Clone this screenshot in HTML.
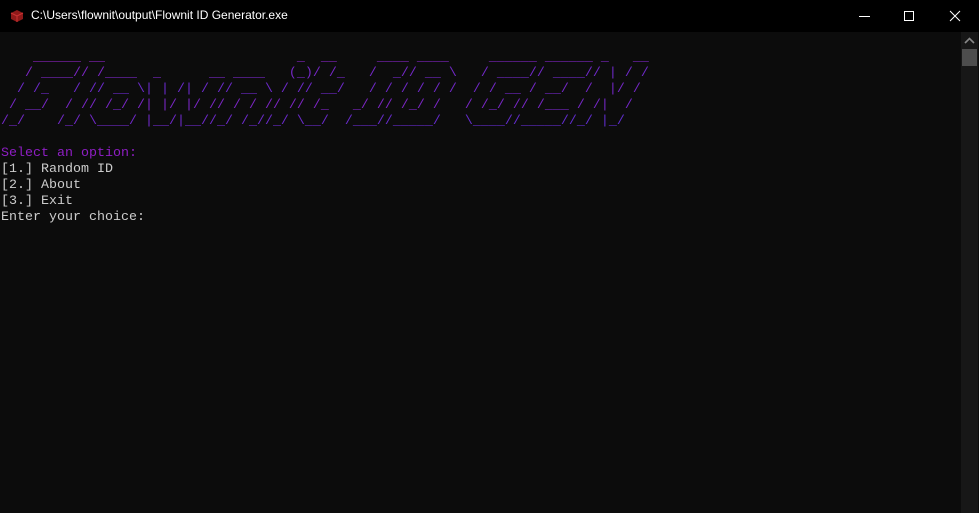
<!DOCTYPE html>
<html><head><style>
html,body{margin:0;padding:0;width:979px;height:513px;overflow:hidden;background:#0c0c0c;}
.tb{position:absolute;left:0;top:0;width:979px;height:32px;background:#000;}
.tb .t{position:absolute;left:31px;top:8px;color:#fff;font:12px "Liberation Sans",sans-serif;}
.term{position:absolute;left:1px;top:34px;width:960px;height:479px;background:#0c0c0c;}
pre{margin:0;font-family:"Liberation Mono",monospace;font-size:13.33px;line-height:16px;white-space:pre;}
.art{background:linear-gradient(90deg,#8e22c0,#6a2acc 45%,#7e25c4 70%,#5f2dd0);-webkit-background-clip:text;background-clip:text;color:transparent;}
.p{color:#8e1ec4}
.w{color:#cccccc}
.sb{position:absolute;left:961px;top:32px;width:17px;height:481px;background:#171717;}
.th{position:absolute;left:962px;top:49px;width:15px;height:17px;background:#4d4d4d;}
</style></head><body>
<div class="tb">
<svg style="position:absolute;left:10px;top:9px" width="14" height="14" viewBox="0 0 14 14"><path d="M7 1 L13 4 L13 10 L7 13 L1 10 L1 4Z" fill="#8f1a1a"/><path d="M1 4 L7 7 L13 4 M7 7 L7 13" stroke="#c33" stroke-width="1" fill="none"/></svg>
<div class="t">C:\Users\flownit\output\Flownit ID Generator.exe</div>
<svg style="position:absolute;left:856px;top:10px" width="112" height="14"><path d="M3 6.5 H14" stroke="#fff"/><rect x="48.5" y="1.5" width="9" height="9" fill="none" stroke="#fff"/><path d="M94 1 L104 11 M104 1 L94 11" stroke="#fff"/></svg>
</div>
<div class="term"><pre>

<span class="art">    ______ __                        _  __     ____ ____     ______ ______ _   __
   / ____// /____  _      __ ____   (_)/ /_   /  _// __ \   / ____// ____// | / /
  / /_   / // __ \| | /| / // __ \ / // __/   / / / / / /  / / __ / __/  /  |/ / 
 / __/  / // /_/ /| |/ |/ // / / // // /_   _/ // /_/ /   / /_/ // /___ / /|  /  
/_/    /_/ \____/ |__/|__//_/ /_//_/ \__/  /___//_____/   \____//_____//_/ |_/   </span>

<span class="p">Select an option:</span>
<span class="w">[1.] Random ID
[2.] About
[3.] Exit
Enter your choice:</span></pre></div>
<div class="sb"></div>
<svg style="position:absolute;left:964px;top:37px" width="11" height="8"><path d="M1 6 L5.5 1.5 L10 6" stroke="#888" stroke-width="1.6" fill="none"/></svg>
<div class="th"></div>
</body></html>
